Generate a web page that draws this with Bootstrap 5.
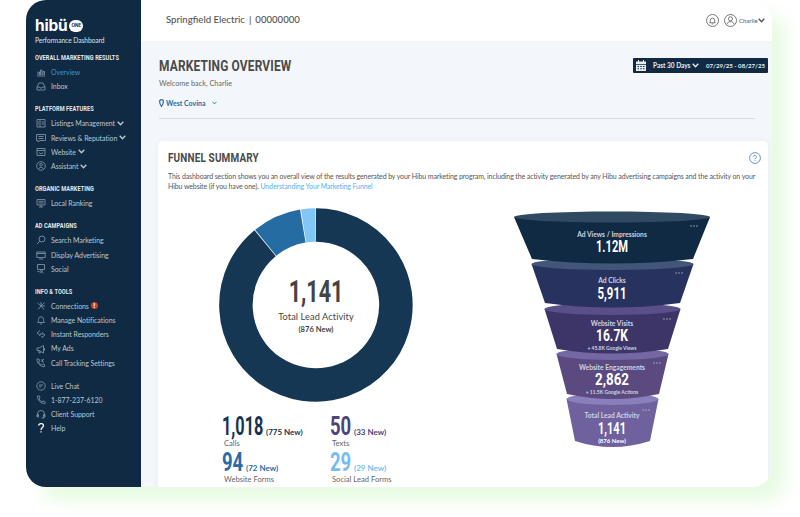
<!DOCTYPE html>
<html lang="en"><head><meta charset="utf-8"><title>Marketing Overview</title>
<link href="https://cdn.jsdelivr.net/npm/bootstrap@5.3.0/dist/css/bootstrap.min.css" rel="stylesheet">
<style>
html,body{height:517px;overflow:hidden;background:#fff}
body{font-family:Lato,"Noto Sans",sans-serif;color:#555}
.appwin{width:746px;height:487px;margin-left:26px;border-radius:20px;overflow:hidden;box-shadow:14px 14px 18px #e8fbe3;background:#fff;position:relative}
.cond{font-family:Roboto,sans-serif;font-weight:700;white-space:nowrap;transform-origin:left center}
.sidenav{width:115px;flex:none;background:#0f2a42;color:#bcc7d1;padding:18px 0 0 9px;font-size:6.95px;letter-spacing:-.03px;line-height:14.2px}
.brandname{font-family:Inter,sans-serif;font-weight:700;font-size:15.5px;line-height:15px;color:#fff;letter-spacing:-.2px}
.brandpill{background:#fff;color:#0f2a42;font:700 4.6px/9px Inter,sans-serif;width:14px;height:12px;border-radius:6px;text-align:center;padding-top:1.5px;margin-left:2px}
.brandsub{font-size:6.6px;line-height:10px;color:#dfe5ea;margin-top:2px}
.navhead{font-family:Roboto,sans-serif;font-weight:700;font-size:7px;line-height:14px;letter-spacing:.1px;color:#e4e9ee;margin-top:9px;white-space:nowrap;transform:scaleX(.8);transform-origin:left center}
.navhead.first{margin-top:6px}
.navrow{height:14.2px;padding-left:1px;white-space:nowrap}
.navrow svg.ic{width:10px;height:10px;margin-right:5px;flex:none;fill:none;stroke:#7f8fa0;stroke-width:.9}
.navrow.active{color:#3f93d2}
.navgap{height:9px}
.chev{width:7px;height:5px;fill:none;stroke:currentColor;stroke-width:1.4;margin-left:2px}
.alertdot{width:7px;height:7px;border-radius:50%;background:#c8402c;color:#fff;font:700 6px/7px Inter,sans-serif;text-align:center;margin-left:2px}
.mainpane{flex:1;min-width:0;background:#f3f7fb}
.topstrip{height:41px;background:#fff;padding:0 7px 0 25px;font-size:9.6px;font-weight:500;color:#555}
.topstrip .pipe{margin:0 4px}
.topic{width:13px;height:13px;fill:none;stroke:#555;stroke-width:.8}
.topbell{margin-right:5px}
.username{font-size:6px;color:#666;margin-left:2px;width:19px}
.topchev{margin-left:0}
.pagehead{padding:16px 4px 0 18px;height:77px;position:relative}
.pagetitle{font-size:15.5px;line-height:18px;color:#4a4a4a;margin:0;letter-spacing:.2px;transform:scaleX(.77)}
.welcome{font-size:7.3px;line-height:10px;color:#666;margin-top:4px}
.place{font-size:7px;line-height:10px;color:#2a6ba3;font-weight:700;margin-top:9px}
.place svg{width:5px;height:8px;fill:none;stroke:#2a6ba3;stroke-width:1.2;margin-right:2px}
.place .chev{margin-left:6px}
.rangebtn{position:absolute;right:4px;top:17px;width:135px;height:15px;background:#0f2a42;color:#e8edf1;font-size:6.5px;font-weight:700;border-radius:1px;padding:0 3px;white-space:nowrap}
.rangebtn svg.cal{width:10px;height:11px;fill:#e8edf1}
.rangelabel{margin-left:7px}
.rangedate{font-size:6.1px}
.divider{height:1px;background:#d5dbe1;margin:0 17px 0 18px}
.funnelcard{margin:22px 4px 0 17px;background:#fff;border-radius:5px;box-shadow:0 0 6px rgba(40,70,100,.06);padding:9px 7px 0 10px;height:360px}
.cardtitle{font-size:12.6px;line-height:15px;color:#4a4a4a;letter-spacing:.2px;margin:0;transform:scaleX(.79)}
.helpic{width:12px;height:12px;fill:none;stroke:#2a6ba3;stroke-width:.7}
.cardtext{font-size:7px;letter-spacing:-.11px;line-height:9.6px;color:#555;margin:7px 0 0;width:595px}
.cardtext span{color:#58b0ea}
.chartrow{margin-top:17px}
.leftcol{width:330px;flex:none}
.donutwrap{width:194px;height:194px;margin-left:51px;position:relative}
.donutwrap svg{width:194px;height:194px;display:block}
.donutlabel{position:absolute;inset:0;text-align:center;color:#444}
.bignum{font-size:32px;line-height:32px;color:#444;transform:scaleX(.67);transform-origin:center}
.donutcap{font-size:9.2px;line-height:11px;margin-top:4px;letter-spacing:.1px}
.donutnew{font-size:7.6px;line-height:11px;font-weight:700;margin-top:2px}
.statgrid{display:grid;grid-template-columns:108px 108px;margin:15px 0 0 54px;row-gap:5px}
.statline{height:20px}
.statnum{font-size:25px;line-height:20px;width:21px;transform:scaleX(.74)}
.statwide{width:41px;transform:scaleX(.65)}
.statnew{font-size:8px;font-weight:700;margin-left:3px;white-space:nowrap}
.statcap{font-size:7.6px;line-height:9px;color:#666;padding-left:2px;margin-top:2px}
.tn{color:#14344f}.tp{color:#4f4379}.tb{color:#2a6ba3}.tl{color:#78bdf0}
.funnelsvg{width:220px;height:250px;display:block;margin-left:2px}
.funnelsvg text{text-anchor:middle;fill:#fff}
.fl{font:700 6.7px Lato,sans-serif;fill:#ced4e2!important}
.fv{font:700 16px Roboto,sans-serif}
.fs{font:700 5px Lato,sans-serif;fill:#ced4e2!important}
.fn{font:700 6px Lato,sans-serif}
</style></head>
<body>
<svg width="0" height="0" class="d-block position-absolute"><defs>
<symbol id="i-chart" viewBox="0 0 10 10"><path d="M1 9h8M2 8V5h1.500v3M4.500 8V3H6v5M7 8V4.500h1.500V8"/></symbol>
<symbol id="i-inbox" viewBox="0 0 10 10"><path d="M1 9V6l2-4h4l2 4v3zM1 6h2.500l.5 1h2l.5-1H9"/></symbol>
<symbol id="i-list" viewBox="0 0 10 10"><path d="M1 1.500h8v7.500H1zM4 1.500V9M5.500 4H8M5.500 6H8M2 4h1M2 6h1"/></symbol>
<symbol id="i-chat" viewBox="0 0 10 10"><path d="M.5 1.500h9v6H4l-2 1.500V7.500H.5zM2.500 3.500h5M2.500 5.500h5"/></symbol>
<symbol id="i-web" viewBox="0 0 10 10"><path d="M1 1.500h8v7H1zM1 3.500h8M3 5.500l2 1.500 2-1.500"/></symbol>
<symbol id="i-bot" viewBox="0 0 10 10"><circle cx="5" cy="5" r="4.300"/><circle cx="5" cy="3.800" r="1.300"/><path d="M2.800 8c0-2 4.400-2 4.400 0"/></symbol>
<symbol id="i-rank" viewBox="0 0 10 10"><path d="M1 1.500h8v5.500H1zM3 9h4M5 7v2M2.500 3.300h5M2.500 5h5"/></symbol>
<symbol id="i-search" viewBox="0 0 10 10"><circle cx="6" cy="4" r="3"/><path d="M3.800 6.200L1 9"/></symbol>
<symbol id="i-display" viewBox="0 0 10 10"><path d="M.8 2h8.400v5.500H.8zM.8 3.500h8.400M3 9h4"/></symbol>
<symbol id="i-social" viewBox="0 0 10 10"><path d="M1.500 .5h7v5h-7zM4 9.500c0-2 3-2 3 0M1.500 7.500h2"/><circle cx="5.500" cy="6.700" r="1"/></symbol>
<symbol id="i-conn" viewBox="0 0 10 10"><path d="M5 5L1.500 2M5 5L2 8.500M5 5L8.500 1.500M5 5h4M5 5l3 3.500M5 1v3"/></symbol>
<symbol id="i-bell" viewBox="0 0 10 10"><path d="M1.500 7.500c1-1 1-2 1-3.200a2.500 2.500 0 015 0c0 1.200 0 2.200 1 3.200zM4.200 9h1.600"/></symbol>
<symbol id="i-swap" viewBox="0 0 10 10"><path d="M4 1.500L1 4l3 2.500V5h3M6 3.500l3 2.500-3 2.500V7"/></symbol>
<symbol id="i-horn" viewBox="0 0 10 10"><path d="M1 4v2.500h2L7.500 9V1.500L3 4zM3 6.500V9h1.300V7.300M8.500 4v2.500"/></symbol>
<symbol id="i-phone" viewBox="0 0 10 10"><path d="M1.500 1L3.500 1 4 3 3 4c.6 1.300 1.700 2.400 3 3l1-1 2 .5v2c-4 .5-8-3.500-7.500-7.500z"/></symbol>
<symbol id="i-callset" viewBox="0 0 10 10"><path d="M1 1l2 0 .5 2-1 1c.6 1.300 1.700 2.400 3 3l1-1 2 .5v2.200C4.500 9 .6 5 1 1zM6 1v3M6 3l2-2M6 3l2 1.500"/></symbol>
<symbol id="i-live" viewBox="0 0 10 10"><circle cx="5" cy="5" r="4.200"/><path d="M3 4h4M3 5.800h2.500"/></symbol>
<symbol id="i-head" viewBox="0 0 10 10"><path d="M1.500 7V5a3.500 3.500 0 017 0v2M1 5.500h1.500V8H1zM7.500 5.500H9V8H7.500zM8 8v1H5.500"/></symbol>
<symbol id="i-user" viewBox="0 0 13 13"><circle cx="6.500" cy="6.500" r="6"/><circle cx="6.500" cy="4.800" r="2"/><path d="M2.800 10.300c.7-3.500 6.700-3.500 7.400 0"/></symbol>
<symbol id="i-bell2" viewBox="0 0 13 13"><circle cx="6.500" cy="6.500" r="6"/><path d="M3.700 8.800c.6-.7.700-1.500.7-2.600a2.100 2.100 0 014.200 0c0 1.100.1 1.900.7 2.600zM5.800 10h1.400"/></symbol>
<symbol id="i-down" viewBox="0 0 7 5"><path d="M.7 .8L3.500 3.800 6.300 .8"/></symbol>
</defs></svg>

<div class="appwin d-flex">
 <aside class="sidenav">
  <div class="d-flex align-items-center"><span class="brandname">hibü</span><span class="brandpill">ONE</span></div>
  <div class="brandsub">Performance Dashboard</div>
  <div class="navhead first">OVERALL MARKETING RESULTS</div>
  <div class="navrow active d-flex align-items-center"><svg class="ic"><use href="#i-chart"/></svg>Overview</div>
  <div class="navrow d-flex align-items-center"><svg class="ic"><use href="#i-inbox"/></svg>Inbox</div>
  <div class="navhead">PLATFORM FEATURES</div>
  <div class="navrow d-flex align-items-center"><svg class="ic"><use href="#i-list"/></svg>Listings Management<svg class="chev"><use href="#i-down"/></svg></div>
  <div class="navrow d-flex align-items-center"><svg class="ic"><use href="#i-chat"/></svg>Reviews &amp; Reputation<svg class="chev"><use href="#i-down"/></svg></div>
  <div class="navrow d-flex align-items-center"><svg class="ic"><use href="#i-web"/></svg>Website<svg class="chev"><use href="#i-down"/></svg></div>
  <div class="navrow d-flex align-items-center"><svg class="ic"><use href="#i-bot"/></svg>Assistant<svg class="chev"><use href="#i-down"/></svg></div>
  <div class="navhead">ORGANIC MARKETING</div>
  <div class="navrow d-flex align-items-center"><svg class="ic"><use href="#i-rank"/></svg>Local Ranking</div>
  <div class="navhead">AD CAMPAIGNS</div>
  <div class="navrow d-flex align-items-center"><svg class="ic"><use href="#i-search"/></svg>Search Marketing</div>
  <div class="navrow d-flex align-items-center"><svg class="ic"><use href="#i-display"/></svg>Display Advertising</div>
  <div class="navrow d-flex align-items-center"><svg class="ic"><use href="#i-social"/></svg>Social</div>
  <div class="navhead">INFO &amp; TOOLS</div>
  <div class="navrow d-flex align-items-center"><svg class="ic"><use href="#i-conn"/></svg>Connections<span class="alertdot">!</span></div>
  <div class="navrow d-flex align-items-center"><svg class="ic"><use href="#i-bell"/></svg>Manage Notifications</div>
  <div class="navrow d-flex align-items-center"><svg class="ic"><use href="#i-swap"/></svg>Instant Responders</div>
  <div class="navrow d-flex align-items-center"><svg class="ic"><use href="#i-horn"/></svg>My Ads</div>
  <div class="navrow d-flex align-items-center"><svg class="ic"><use href="#i-callset"/></svg>Call Tracking Settings</div>
  <div class="navgap"></div>
  <div class="navrow d-flex align-items-center"><svg class="ic"><use href="#i-live"/></svg>Live Chat</div>
  <div class="navrow d-flex align-items-center"><svg class="ic"><use href="#i-phone"/></svg>1-877-237-6120</div>
  <div class="navrow d-flex align-items-center"><svg class="ic"><use href="#i-head"/></svg>Client Support</div>
  <div class="navrow d-flex align-items-center"><svg class="ic" viewBox="0 0 10 10"><path d="M2.500 2.500c.5-2.500 5-2.500 5 0 0 2-2.500 2-2.500 4.500M5 8.300v1.200" stroke="#fff" stroke-width="1.300"/></svg>Help</div>
 </aside>
 <div class="mainpane">
  <header class="topstrip d-flex align-items-center">
   <div>Springfield Electric<span class="pipe">|</span>00000000</div>
   <div class="ms-auto d-flex align-items-center">
    <svg class="topic topbell"><use href="#i-bell2"/></svg>
    <svg class="topic"><use href="#i-user"/></svg><span class="username">Charlie</span><svg class="chev topchev"><use href="#i-down"/></svg>
   </div>
  </header>
  <section class="pagehead">
   <h1 class="pagetitle cond">MARKETING OVERVIEW</h1>
   <div class="welcome">Welcome back, Charlie</div>
   <div class="place d-flex align-items-center"><svg viewBox="0 0 5 8"><path d="M2.500 7.500C1 5.500.6 4 .6 2.600a1.900 1.900 0 013.800 0C4.400 4 4 5.500 2.500 7.500z"/></svg>West Covina<svg class="chev"><use href="#i-down"/></svg></div>
   <div class="rangebtn d-flex align-items-center">
    <svg class="cal" viewBox="0 0 10 11"><path d="M0 1.500h2V0h1v1.500h4V0h1v1.500h2V4H0zM0 4.800h10V11H0zM1.500 6v1h1.500V6zM4.300 6v1h1.500V6zM7 6v1h1.500V6zM1.500 8.300v1h1.500v-1zM4.300 8.300v1h1.500v-1zM7 8.300v1h1.500v-1z" fill-rule="evenodd"/></svg>
    <span class="rangelabel">Past 30 Days</span><svg class="chev"><use href="#i-down"/></svg>
    <span class="ms-auto rangedate">07/29/25 - 08/27/25</span>
   </div>
  </section>
  <div class="divider"></div>
  <section class="funnelcard">
   <div class="d-flex align-items-center justify-content-between">
    <h2 class="cardtitle cond">FUNNEL SUMMARY</h2>
    <svg class="helpic" viewBox="0 0 12 12"><circle cx="6" cy="6" r="5.400"/><path d="M4.500 4.800c0-2 3-2 3 0 0 1.200-1.500 1-1.500 2.400M6 8.200v1"/></svg>
   </div>
   <p class="cardtext">This dashboard section shows you an overall view of the results generated by your Hibu marketing program, including the activity generated by any Hibu advertising campaigns and the activity on your Hibu website (if you have one). <span>Understanding Your Marketing Funnel</span></p>
   <div class="d-flex chartrow">
    <div class="leftcol">
     <div class="donutwrap">
      <svg viewBox="0 0 194 194"><g fill="none" stroke-width="33.500">
       <path d="M97 17A80 80 0 1 1 46.100 35.200" stroke="#163754"/>
       <path d="M46.700 34.800A80 80 0 0 1 83.800 18.100" stroke="#256ca3"/>
       <path d="M84.500 18A80 80 0 0 1 96.600 17" stroke="#82c6f6"/>
      </g></svg>
      <div class="donutlabel d-flex flex-column justify-content-center">
       <div class="bignum cond">1,141</div>
       <div class="donutcap">Total Lead Activity</div>
       <div class="donutnew">(876 New)</div>
      </div>
     </div>
     <div class="statgrid">
      <div><div class="statline d-flex align-items-baseline"><span class="statnum statwide cond tn">1,018</span><span class="statnew tn">(775 New)</span></div><div class="statcap">Calls</div></div>
      <div><div class="statline d-flex align-items-baseline"><span class="statnum cond tp">50</span><span class="statnew tp">(33 New)</span></div><div class="statcap">Texts</div></div>
      <div><div class="statline d-flex align-items-baseline"><span class="statnum cond tb">94</span><span class="statnew tb">(72 New)</span></div><div class="statcap">Website Forms</div></div>
      <div><div class="statline d-flex align-items-baseline"><span class="statnum cond tl">29</span><span class="statnew tl">(29 New)</span></div><div class="statcap">Social Lead Forms</div></div>
     </div>
    </div>
    <svg class="funnelsvg" viewBox="500 208 220 250">
     <path d="M566.500 399 L575 441 Q612 453 650 441 L658.500 399z" fill="#6f619e"/><ellipse cx="612.500" cy="399" rx="46" ry="6" fill="#8a7fbd"/>
     <path d="M556.500 354 L567 394 Q612 404 659 394 L668.500 354z" fill="#5b4a7f"/><ellipse cx="612.500" cy="354" rx="56" ry="6" fill="#7567a3"/>
     <path d="M544.500 309 L557 349 Q612 358 668 349 L680.500 309z" fill="#3d3567"/><ellipse cx="612.500" cy="309" rx="68" ry="6" fill="#5a4f88"/>
     <path d="M531.500 264 L545 303 Q612 312 680 303 L693.500 264z" fill="#27325f"/><ellipse cx="612.500" cy="264" rx="81" ry="6" fill="#42567a"/>
     <path d="M514 217 L532 259 Q612 268 693 259 L710 217z" fill="#0f2a42"/><ellipse cx="612" cy="217" rx="98" ry="5.500" fill="#2f4a62"/>
     <text class="fl" x="612" y="237">Ad Views / Impressions</text><text class="fv" x="612" y="252" textLength="32" lengthAdjust="spacingAndGlyphs">1.12M</text>
     <text class="fl" x="612" y="283">Ad Clicks</text><text class="fv" x="612" y="299" textLength="29" lengthAdjust="spacingAndGlyphs">5,911</text>
     <text class="fl" x="612" y="326">Website Visits</text><text class="fv" x="612" y="341" textLength="32" lengthAdjust="spacingAndGlyphs">16.7K</text><text class="fs" x="612" y="350">+ 45.8K Google Views</text>
     <text class="fl" x="612" y="370">Website Engagements</text><text class="fv" x="612" y="385" textLength="34" lengthAdjust="spacingAndGlyphs">2,862</text><text class="fs" x="612" y="394">+ 11.5K Google Actions</text>
     <text class="fl" x="612" y="418">Total Lead Activity</text><text class="fv" x="612" y="434" textLength="28" lengthAdjust="spacingAndGlyphs">1,141</text><text class="fn" x="612" y="443">(876 New)</text>
     <g fill="#b8c0cc"><circle cx="691" cy="226" r=".7"/><circle cx="694" cy="226" r=".7"/><circle cx="697" cy="226" r=".7"/><circle cx="676" cy="273" r=".7"/><circle cx="679" cy="273" r=".7"/><circle cx="682" cy="273" r=".7"/><circle cx="664" cy="319" r=".7"/><circle cx="667" cy="319" r=".7"/><circle cx="670" cy="319" r=".7"/><circle cx="654" cy="363" r=".7"/><circle cx="657" cy="363" r=".7"/><circle cx="660" cy="363" r=".7"/><circle cx="643" cy="410" r=".7"/><circle cx="646" cy="410" r=".7"/><circle cx="649" cy="410" r=".7"/></g>
    </svg>
   </div>
  </section>
 </div>
</div>
<script src="https://cdn.jsdelivr.net/npm/bootstrap@5.3.0/dist/js/bootstrap.bundle.min.js"></script>
</body></html>
